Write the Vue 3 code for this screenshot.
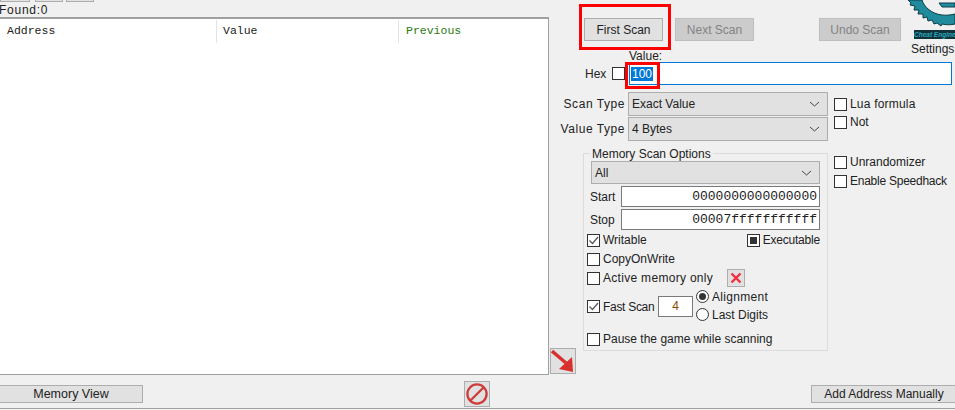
<template>
  <div class="app">
    <div class="main">
      <div class="left">
        <div class="tabs"><i class="t1"></i><i class="t2"></i><i class="t3"></i></div>
        <div class="found">Found:0</div>
        <div class="list">
          <div class="head">
            <span class="col c1">Address</span>
            <span class="col c2">Value</span>
            <span class="col c3">Previous</span>
          </div>
        </div>
      </div>
      <div class="panel">
        <div class="scanrow">
          <button class="btn first marked">First Scan</button>
          <button class="btn off next">Next Scan</button>
          <button class="btn off undo">Undo Scan</button>
          <div class="logo">
            <svg width="47" height="29" viewBox="0 0 47 29">
              <path d="M0 0 L14 0 C16 7 24 14 34 15 C39 15.500 43 15 47 14 L47 24 C43 25 38 25 34 24 L33 26 L29 23 L26 24 L24 20 L20 21 L19 17 L15 18 L15 14 L10 14 L11 10 L6 10 L7 6 L2 5 L3 3 Z" fill="#1f8b9c" stroke="#0c3c48" stroke-width="1"/>
              <path d="M31 3 L47 3 L47 7 L34 7 Z" fill="#1f8b9c" stroke="#0c3c48" stroke-width="1"/>
            </svg>
            <div class="logotext">Cheat Engine</div>
            <div class="settings">Settings</div>
          </div>
        </div>
        <div class="valuelabel">Value:</div>
        <div class="valuerow">
          <span class="hex">Hex</span>
          <span class="box"></span>
          <div class="valueinput"><span class="sel marked2">100</span></div>
        </div>
        <div class="typegrid">
          <span class="tlabel">Scan Type</span>
          <div class="combo"><span>Exact Value</span><svg class="chev" width="11" height="6" viewBox="0 0 11 6"><path d="M1 1 L5.5 5 L10 1" fill="none" stroke="#444"/></svg></div>
          <label class="chk lua"><span class="box"></span>Lua formula</label>
          <span class="tlabel">Value Type</span>
          <div class="combo"><span>4 Bytes</span><svg class="chev" width="11" height="6" viewBox="0 0 11 6"><path d="M1 1 L5.5 5 L10 1" fill="none" stroke="#444"/></svg></div>
          <label class="chk notchk"><span class="box"></span>Not</label>
        </div>
        <div class="optionsrow">
          <div class="group">
            <div class="legend">Memory Scan Options</div>
            <div class="combo allcombo"><span>All</span><svg class="chev" width="11" height="6" viewBox="0 0 11 6"><path d="M1 1 L5.5 5 L10 1" fill="none" stroke="#444"/></svg></div>
            <div class="addr"><span class="alabel">Start</span><div class="ainput">0000000000000000</div></div>
            <div class="addr"><span class="alabel">Stop</span><div class="ainput">00007fffffffffff</div></div>
            <div class="line between w1">
              <label class="chk"><span class="box"><svg width="11" height="11" viewBox="0 0 11 11"><path d="M1.5 5.500 L4.500 8.500 L10 2" fill="none" stroke="#555" stroke-width="1.2"/></svg></span>Writable</label>
              <label class="chk exec"><span class="box"><i class="square"></i></span>Executable</label>
            </div>
            <div class="line w2"><label class="chk"><span class="box"></span>CopyOnWrite</label></div>
            <div class="line w2 active">
              <label class="chk amem"><span class="box"></span>Active memory only</label>
              <span class="xbtn"><svg width="12" height="12" viewBox="0 0 12 12"><path d="M1.500 1.500 L10.500 10.500 M10.500 1.500 L1.500 10.500" stroke="#f0303f" stroke-width="2.4"/></svg></span>
            </div>
            <div class="fast">
              <label class="chk"><span class="box"><svg width="11" height="11" viewBox="0 0 11 11"><path d="M1.5 5.500 L4.500 8.500 L10 2" fill="none" stroke="#555" stroke-width="1.2"/></svg></span>Fast Scan</label>
              <div class="fastinput">4</div>
              <div class="radios">
                <label class="radio align"><span class="dot on"></span>Alignment</label>
                <label class="radio"><span class="dot"></span>Last Digits</label>
              </div>
            </div>
            <div class="line pause"><label class="chk"><span class="box"></span>Pause the game while scanning</label></div>
          </div>
          <div class="side">
            <label class="chk"><span class="box"></span>Unrandomizer</label>
            <label class="chk speed"><span class="box"></span>Enable Speedhack</label>
          </div>
        </div>
        <div class="arrowbtn">
          <svg width="26" height="26" viewBox="0 0 26 26">
            <path d="M2 3 L16 15" stroke="#d8302c" stroke-width="3.4" fill="none"/>
            <path d="M23 24 L9 21 L22 9 Z" fill="#d8302c"/>
          </svg>
        </div>
      </div>
    </div>
    <div class="footer">
      <button class="btn memory">Memory View</button>
      <div class="stopbtn">
        <svg width="24" height="24" viewBox="0 0 24 24">
          <circle cx="12" cy="12" r="9.6" fill="none" stroke="#cf3a3a" stroke-width="2.3"/>
          <path d="M5.2 18.8 L18.8 5.2" stroke="#cf3a3a" stroke-width="2.3"/>
        </svg>
      </div>
      <button class="btn add">Add Address Manually</button>
    </div>
  </div>
</template>

<script setup>
</script>

<style>
html, body { margin: 0; background: #f0f0f0; overflow: hidden; }
</style>

<style scoped>
.app {
  width: 955px; height: 410px; overflow: hidden; background: #f0f0f0;
  display: flex; flex-direction: column;
  font-family: "Liberation Sans", Arial, sans-serif; font-size: 12px; color: #222;
}
.main { display: flex; height: 375px; flex: none; }
.left { width: 549px; flex: none; display: flex; flex-direction: column; }
.tabs { height: 3px; display: flex; align-items: flex-start; }
.tabs i { display: block; height: 2px; background: #e1e1e1; border: solid #adadad; border-width: 0 1px 1px; box-sizing: border-box; }
.t1 { width: 30px; }
.t2 { width: 28px; margin-left: 5px; }
.t3 { width: 28px; margin-left: 3px; }
.found { height: 14px; line-height: 15px; margin-left: -1px; font-size: 12px; letter-spacing: .75px; }
.list { flex: 1; background: #fff; border: solid #a0a0a0; border-width: 2px 1px 1px 0; box-sizing: border-box; }
.head { display: flex; height: 24px; padding-top: 1px; box-sizing: border-box; font-family: "Liberation Mono", monospace; font-size: 11.5px; }
.col { line-height: 22px; box-sizing: border-box; padding-left: 7px; }
.c1 { width: 216px; }
.c2 { width: 182px; border-left: 1px solid #e3e3e3; padding-left: 6px; }
.c3 { flex: 1; border-left: 1px solid #e3e3e3; padding-left: 7px; color: #2a7a10; }

.panel { flex: 1; display: flex; flex-direction: column; min-width: 0; }
.btn {
  font: inherit; color: #222; background: #e1e1e1; border: 1px solid #adadad;
  padding: 0; margin: 0; box-sizing: border-box; border-radius: 0;
}
.off { background: #cccccc; border-color: #bfbfbf; color: #838383; }
.scanrow { display: flex; align-items: flex-start; height: 23px; margin-top: 18px; padding-left: 35px; }
.first { width: 79px; height: 23px; position: relative; }
.marked::after {
  content: ""; position: absolute; left: -6px; right: -9px; top: -15px; bottom: -10px;
  border: 3px solid #ff0000;
}
.next { width: 79px; height: 23px; margin-left: 12px; }
.undo { width: 82px; height: 23px; margin-left: 65px; }
.logo { width: 47px; margin-left: 7px; margin-top: -18px; flex: none; }
.logo svg { display: block; }
.logotext {
  width: 41px; height: 9px; margin: 1px 0 0 6px; background: #12323c; color: #2aa7bb;
  font-size: 6.5px; font-weight: 700; font-style: italic; line-height: 9px; white-space: nowrap;
}
.settings { margin: 3px 0 0 3px; line-height: 14px; white-space: nowrap; }
.valuelabel { height: 14px; line-height: 16px; margin: 7px 0 0 80px; }
.valuerow { display: flex; align-items: center; height: 23px; padding-left: 36px; }
.hex { width: 27px; }
.valueinput {
  width: 323px; height: 23px; margin-left: 4px; background: #fff; border: 1px solid #0078d7;
  box-sizing: border-box; display: flex; align-items: center; padding-left: 1px;
}
.sel { background: #0078d7; color: #fff; padding: 0 1px; line-height: 14px; height: 14px; position: relative; width: 20px; }
.marked2::after {
  content: ""; position: absolute; left: -6px; top: -5px; width: 29px; height: 21px;
  border: 3px solid #ff0000;
}
.box {
  width: 13px; height: 13px; background: #fff; border: 1px solid #333; box-sizing: border-box;
  flex: none; display: inline-flex; align-items: center; justify-content: center;
}
.chk { display: inline-flex; align-items: center; gap: 3px; height: 14px; line-height: 14px; white-space: nowrap; }
.lua { letter-spacing: .2px; }
.exec { letter-spacing: -.2px; }
.amem { letter-spacing: .3px; }
.speed { letter-spacing: -.25px; }
.align { letter-spacing: .3px; }
.typegrid {
  display: grid; grid-template-columns: 76px 200px auto; grid-template-rows: 24px 24px;
  column-gap: 3px; row-gap: 1px; margin-top: 7px; align-items: center;
}
.tlabel { text-align: right; white-space: nowrap; letter-spacing: .55px; }
.combo {
  height: 24px; background: #e1e1e1; border: 1px solid #adadad; box-sizing: border-box;
  display: flex; align-items: center; justify-content: space-between; padding: 0 7px 0 3px;
}
.typegrid .chk { margin-left: 3px; }
.typegrid .notchk { margin-bottom: 14px; }
.chev { flex: none; }
.optionsrow { display: flex; align-items: flex-start; margin-top: 12px; }
.group {
  width: 245px; height: 198px; margin-left: 34px; border: 1px solid #dcdcdc; box-sizing: border-box;
  padding-left: 3px; flex: none;
}
.legend { height: 14px; line-height: 16px; margin: -8px 0 0 3px; padding: 0 2px; background: #f0f0f0; width: fit-content; }
.allcombo { width: 229px; height: 23px; margin: 1px 0 0 4px; }
.addr { display: flex; align-items: center; height: 21px; margin-top: 2px; }
.alabel { width: 31px; margin-left: 3px; }
.ainput {
  width: 199px; height: 21px; background: #fff; border: 1px solid #7a7a7a; box-sizing: border-box;
  text-align: right; padding-right: 2px; line-height: 19px; font-family: "Liberation Mono", monospace; font-size: 13px;
}
.line { display: flex; align-items: center; height: 14px; }
.between { justify-content: space-between; }
.w1 { width: 233px; margin-top: 3px; }
.w2 { margin-top: 5px; }
.active { width: 158px; justify-content: space-between; }
.square { display: block; width: 7px; height: 7px; background: #333; }
.xbtn {
  width: 18px; height: 18px; background: #e1e1e1; border: 1px solid #adadad; box-sizing: border-box;
  display: flex; align-items: center; justify-content: center; flex: none;
}
.fast { display: flex; align-items: center; height: 21px; margin-top: 11px; }
.fastinput {
  width: 35px; height: 21px; background: #fff; border: 1px solid #7a7a7a; box-sizing: border-box;
  text-align: center; line-height: 19px; color: #8a4a00;
}
.fast .chk { width: 71px; letter-spacing: -.3px; }
.radios { display: flex; flex-direction: column; margin: -2px 0 0 3px; gap: 4px; }
.radio { display: flex; align-items: center; gap: 3px; height: 14px; white-space: nowrap; }
.dot {
  width: 13px; height: 13px; border-radius: 50%; background: #fff; border: 1px solid #333; box-sizing: border-box;
  display: inline-flex; align-items: center; justify-content: center; flex: none;
}
.dot.on::before { content: ""; width: 7px; height: 7px; border-radius: 50%; background: #333; }
.pause { margin-top: 15px; }
.side { display: flex; flex-direction: column; align-items: flex-start; gap: 5px; margin: 2px 0 0 6px; }
.arrowbtn {
  width: 26px; height: 26px; margin: -3px 0 0 1px; background: #e1e1e1; border: 1px solid #adadad; box-sizing: border-box;
  flex: none; overflow: hidden;
}
.arrowbtn svg { display: block; margin: -1px; }
.footer {
  height: 34px; flex: none; display: flex; align-items: flex-start; padding-top: 10px; box-sizing: border-box;
  border-bottom: 1px solid #a0a0a0;
}
.memory { width: 144px; height: 18px; margin-left: -1px; flex: none; line-height: 14px; font-size: 12.5px; }
.stopbtn {
  width: 26px; height: 26px; margin: -4px 0 0 321px; background: #e1e1e1; border: 1px solid #adadad; box-sizing: border-box; flex: none;
}
.stopbtn svg { display: block; }
.add { width: 146px; height: 18px; margin-left: 321px; flex: none; line-height: 14px; white-space: nowrap; }
</style>
